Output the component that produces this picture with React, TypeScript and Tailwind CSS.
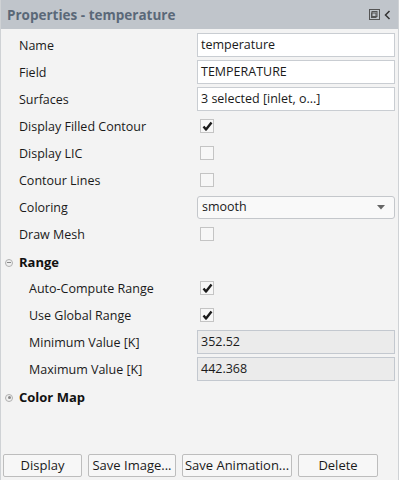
import React from "react";

const font = { fontFamily: '"Open Sans", "Noto Sans", sans-serif' };

function Check({ checked }: { checked: boolean }) {
  return (
    <div className="w-[14px] h-[14px] border border-[#c4c4c4] bg-[#f7f7f7] flex items-center justify-center ml-[3px]">
      {checked && (
        <svg width="11" height="10" viewBox="0 0 11 10">
          <path d="M1.5 5.5 L4 8.5 L9.5 1.5" fill="none" stroke="#1a1a1a" strokeWidth="2.4" strokeLinejoin="round" />
        </svg>
      )}
    </div>
  );
}

function Row({ label, indent, children }: { label: string; indent?: boolean; children: React.ReactNode }) {
  return (
    <div className="flex items-center h-[24px] mb-[3px]">
      <div className={`w-[196px] pt-[3px] text-[12.5px] text-[#1a1a1a] ${indent ? "pl-[28px]" : "pl-[18px]"}`}>{label}</div>
      <div className="flex-1 pr-[3px] flex items-center">{children}</div>
    </div>
  );
}

function TextBox({ value, disabled }: { value: string; disabled?: boolean }) {
  return (
    <div
      className={`w-full h-[24px] border ${disabled ? "border-[#c3c8cf] bg-[#ebebeb]" : "border-[#c9cdd2] bg-white"} flex items-center px-[3px] pt-[1px] text-[12.5px] text-[#1a1a1a]`}
    >
      {value}
    </div>
  );
}

function Section({ label, open }: { label: string; open: boolean }) {
  return (
    <div className="flex items-center h-[24px] mb-[3px] pt-[3px]">
      <div className="w-[18px] flex items-center justify-center">
        <div className="w-[8px] h-[8px] rounded-full border border-[#b0b0b0] bg-[#f0f0f0] flex items-center justify-center ml-[-2px]">
          {open ? (
            <div className="w-[4px] h-[1px] bg-[#888]" />
          ) : (
            <div className="w-[3px] h-[3px] rounded-full bg-[#888]" />
          )}
        </div>
      </div>
      <div className="text-[13px] font-bold text-[#111]">{label}</div>
    </div>
  );
}

function Btn({ label, w }: { label: string; w: string }) {
  return (
    <div className={`${w} h-[23px] border border-[#bdbdbd] rounded-[2px] bg-[#f7f7f7] flex items-center justify-center text-[13px] text-[#1a1a1a]`}>
      {label}
    </div>
  );
}

export default function App() {
  return (
    <div style={font} className="w-[399px] h-[480px] bg-[#f3f3f3] flex flex-col border-x border-[#cfd2d5]">
      <div className="h-[29px] bg-[#c0c5cb] flex items-center justify-between px-[6px] shrink-0">
        <div className="text-[13.5px] font-bold text-[#5a6878] pt-[2px]">Properties - temperature</div>
        <div className="flex items-center gap-[4px] pr-[1px]">
          <svg width="11" height="11" viewBox="0 0 11 11">
            <rect x="0.5" y="0.5" width="10" height="10" fill="none" stroke="#555" strokeWidth="1" />
            <rect x="3" y="2.5" width="5" height="5" fill="none" stroke="#555" strokeWidth="1" />
            <rect x="2.5" y="4" width="4.5" height="4.5" fill="none" stroke="#555" strokeWidth="1" />
          </svg>
          <svg width="7" height="10" viewBox="0 0 7 10">
            <path d="M5.5 1 L1.5 5 L5.5 9" fill="none" stroke="#333" strokeWidth="1.5" />
          </svg>
        </div>
      </div>
      <div className="pt-[4px] flex-1 flex flex-col">
        <Row label="Name"><TextBox value="temperature" /></Row>
        <Row label="Field"><TextBox value="TEMPERATURE" /></Row>
        <Row label="Surfaces"><TextBox value="3 selected [inlet, o...]" /></Row>
        <Row label="Display Filled Contour"><Check checked /></Row>
        <Row label="Display LIC"><Check checked={false} /></Row>
        <Row label="Contour Lines"><Check checked={false} /></Row>
        <Row label="Coloring">
          <div className="w-full h-[23px] border border-[#c4c7cb] rounded-[3px] bg-[#f9f9f9] flex items-center justify-between px-[4px] pt-[1px] text-[12.5px] text-[#1a1a1a]">
            <span>smooth</span>
            <svg width="8" height="5" viewBox="0 0 8 5" className="mr-[5px]">
              <path d="M0 0 L8 0 L4 4.5 Z" fill="#666" />
            </svg>
          </div>
        </Row>
        <Row label="Draw Mesh"><Check checked={false} /></Row>
        <Section label="Range" open />
        <Row label="Auto-Compute Range" indent><Check checked /></Row>
        <Row label="Use Global Range" indent><Check checked /></Row>
        <Row label="Minimum Value [K]" indent><TextBox value="352.52" disabled /></Row>
        <Row label="Maximum Value [K]" indent><TextBox value="442.368" disabled /></Row>
        <Section label="Color Map" open={false} />
        <div className="flex-1" />
        <div className="flex items-center gap-[6px] pl-[2px] pb-[3px]">
          <Btn label="Display" w="w-[79px]" />
          <Btn label="Save Image..." w="w-[88px]" />
          <Btn label="Save Animation..." w="w-[110px]" />
          <Btn label="Delete" w="w-[80px]" />
        </div>
      </div>
    </div>
  );
}
